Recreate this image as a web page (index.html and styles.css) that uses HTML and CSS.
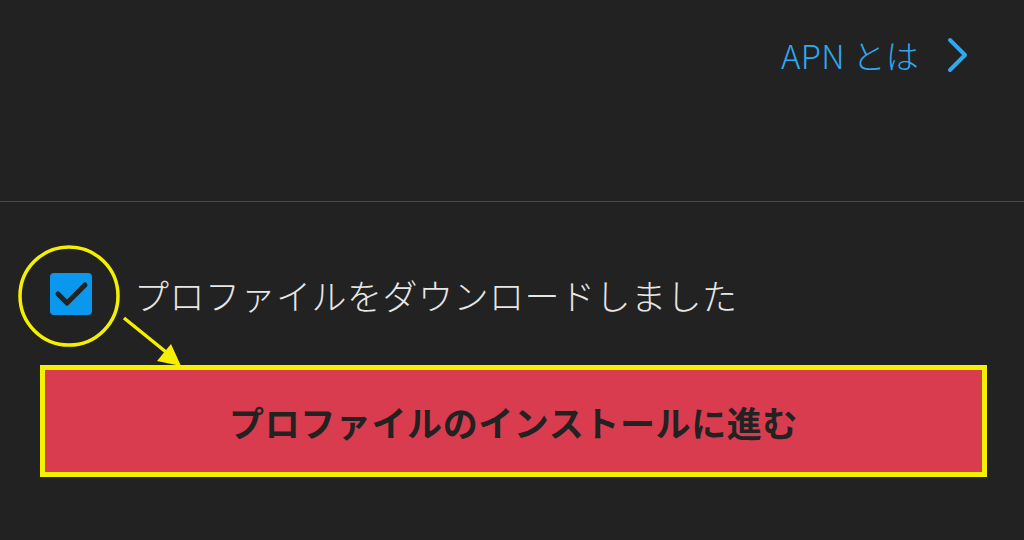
FILE: index.html
```html
<!DOCTYPE html>
<html lang="ja">
<head>
<meta charset="utf-8">
<link rel="stylesheet" href="styles.css">
</head>
<body>
<div class="page">
  <header class="top">
    <a class="apn-link" href="#">
      <span class="apn-text">APN とは</span>
      <svg class="chevron" width="22" height="36" viewBox="0 0 22 36" aria-hidden="true">
        <path d="M3 3 L18 18 L3 33" fill="none" stroke="#2fa8f0" stroke-width="4" stroke-linecap="round" stroke-linejoin="round"/>
      </svg>
    </a>
  </header>
  <main class="content">
    <label class="check-row">
      <span class="checkbox">
        <svg width="42" height="42" viewBox="0 0 42 42" aria-hidden="true">
          <path d="M8 21 L17 30 L35 12" fill="none" stroke="#222222" stroke-width="5" stroke-linecap="round" stroke-linejoin="round"/>
        </svg>
      </span>
      <span class="check-label">プロファイルをダウンロードしました</span>
    </label>
    <button class="install-btn" type="button">プロファイルのインストールに進む</button>
    <svg class="annot" width="1024" height="540" viewBox="0 0 1024 540" aria-hidden="true">
      <circle cx="69" cy="296" r="49" fill="none" stroke="#f4f000" stroke-width="3.5"/>
      <line x1="124" y1="318" x2="166" y2="352" stroke="#f4f000" stroke-width="3.5"/>
      <polygon points="181,366 157,361 171,344" fill="#f4f000"/>
    </svg>
  </main>
</div>
</body>
</html>
```

FILE: styles.css
```css
html, body {
  margin: 0;
  padding: 0;
  background: #222222;
}
body {
  width: 1024px;
  height: 540px;
  overflow: hidden;
  font-family: "Noto Sans CJK JP", "Noto Sans", sans-serif;
}
.page {
  position: relative;
  width: 1024px;
  height: 540px;
}
.top {
  height: 201px;
  border-bottom: 1px solid #4a4a4a;
  display: flex;
  justify-content: flex-end;
  align-items: flex-start;
  padding-right: 55px;
  box-sizing: content-box;
}
.apn-link {
  display: flex;
  align-items: center;
  gap: 28px;
  margin-top: 36px;
  text-decoration: none;
  color: #2fa8f0;
}
.apn-text {
  font-size: 33px;
  font-weight: 300;
  line-height: 38px;
  letter-spacing: 0.3px;
}
.chevron {
  display: block;
}
.content {
  display: flex;
  flex-direction: column;
  align-items: flex-start;
  padding-top: 71px;
}
.check-row {
  display: flex;
  align-items: center;
  gap: 42px;
  margin-left: 50px;
  height: 42px;
}
.checkbox {
  width: 42px;
  height: 42px;
  border-radius: 4px;
  background: #0a98ee;
  display: block;
}
.checkbox svg {
  display: block;
}
.check-label {
  font-size: 35px;
  font-weight: 300;
  line-height: 42px;
  color: #e6e6e6;
  letter-spacing: 0.5px;
  margin-top: 2px;
}
.install-btn {
  margin-top: 50px;
  margin-left: 40px;
  width: 947px;
  height: 112px;
  box-sizing: border-box;
  border: 5px solid #f4f000;
  background: #d93c4f;
  color: #222222;
  font-family: "Noto Sans CJK JP", "Noto Sans", sans-serif;
  font-weight: 700;
  font-size: 35px;
  padding: 0;
  letter-spacing: 0.6px;
}
.annot {
  position: absolute;
  left: 0;
  top: 0;
  pointer-events: none;
}
```
